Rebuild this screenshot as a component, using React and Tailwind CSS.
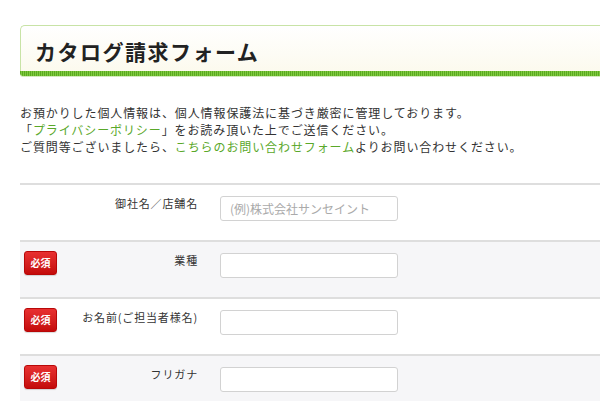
import React from "react";

const rows = [
  { label: "御社名／店舗名", required: false, placeholder: "(例)株式会社サンセイント", bg: "bg-white" },
  { label: "業種", required: true, placeholder: "", bg: "bg-[#f6f6f8]" },
  { label: "お名前(ご担当者様名)", required: true, placeholder: "", bg: "bg-white" },
  { label: "フリガナ", required: true, placeholder: "", bg: "bg-[#f6f6f8]" },
];

function Badge() {
  return (
    <div className="w-[33px] h-[24px] rounded-[3px] border border-[#b80808] bg-gradient-to-b from-[#e83030] to-[#c40a0a] flex items-center justify-center text-white text-[10px] font-bold leading-none shadow-[0_1px_1px_rgba(0,0,0,0.15)]">
      必須
    </div>
  );
}

export default function App() {
  return (
    <div className="w-[600px] h-[401px] overflow-hidden bg-white font-['Noto_Sans_CJK_JP','Noto_Sans',sans-serif]">
      <div className="pl-[20px] pt-[25px] w-[660px]">
        <div className="rounded-tl-[5px] border-t border-l border-[#c8e3a6] bg-gradient-to-b from-white to-[#fcfaee] h-[46px] flex items-center pl-[14px] pt-[6px]">
          <h1 className="text-[21px] font-bold tracking-[1.5px] text-[#222] leading-none">
            カタログ請求フォーム
          </h1>
        </div>
        <div className="h-[5px] rounded-bl-[3px] bg-[repeating-linear-gradient(90deg,#5aab1f_0px,#5aab1f_1px,#80c83f_1px,#80c83f_2px)] shadow-[0_1px_0_#d5ecbe]" />

        <div className="mt-[28px] text-[12px] leading-[17px] tracking-[0.9px] text-[#333]">
          <p>お預かりした個人情報は、個人情報保護法に基づき厳密に管理しております。</p>
          <p>
            「<span className="text-[#5aa82a]">プライバシーポリシー</span>」をお読み頂いた上でご送信ください。
          </p>
          <p>
            ご質問等ございましたら、<span className="text-[#5aa82a]">こちらのお問い合わせフォーム</span>よりお問い合わせください。
          </p>
        </div>

        <div className="mt-[28px] border-t-2 border-[#dedede]">
          {rows.map((r, i) => (
            <div key={i} className={`flex h-[57px] border-b-2 border-[#dedede] ${r.bg}`}>
              <div className="w-[50px] pl-[4px] pt-[9px]">{r.required && <Badge />}</div>
              <div className="w-[128px] pt-[10px] text-right text-[11px] leading-[16px] tracking-[0.85px] text-[#333]">
                {r.label}
              </div>
              <div className="ml-[22px] mt-[11px]">
                <div className="w-[178px] h-[25px] rounded-[3px] border border-[#d2d2d2] bg-white flex items-center pl-[9px] text-[12px] text-[#aaa]">
                  {r.placeholder}
                </div>
              </div>
            </div>
          ))}
        </div>
      </div>
    </div>
  );
}
